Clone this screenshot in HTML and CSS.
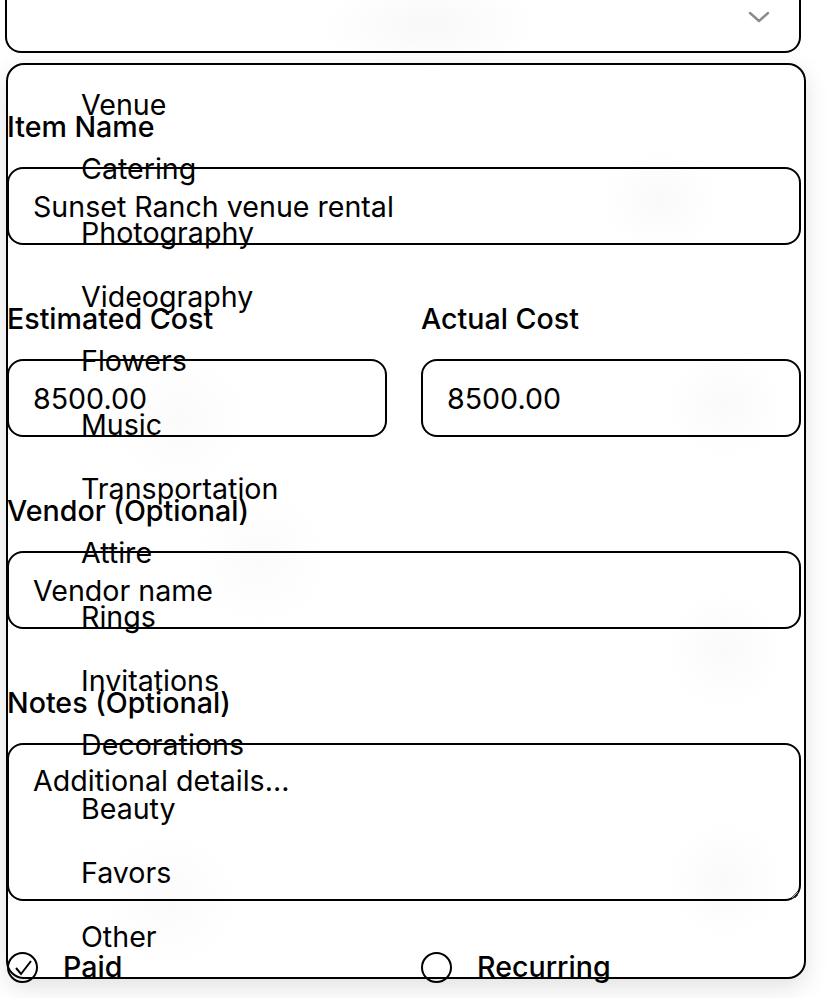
FILE: index.html
```html
<!DOCTYPE html>
<html lang="en">
<head>
<meta charset="utf-8">
<title>Budget item</title>
<link rel="stylesheet" href="styles.css">
</head>
<body>
<div class="page">
  <form class="form">
    <div class="select-box">
      <svg class="chevron" width="22" height="12" viewBox="0 0 22 12"><path d="M2 2 L11 10 L20 2" fill="none" stroke="#8a8a8a" stroke-width="2.4" stroke-linecap="round" stroke-linejoin="round"/></svg>
    </div>

    <div class="field">
      <label class="label">Item Name</label>
      <input class="input" type="text" value="Sunset Ranch venue rental">
    </div>

    <div class="row">
      <div class="field">
        <label class="label">Estimated Cost</label>
        <input class="input" type="text" value="8500.00">
      </div>
      <div class="field">
        <label class="label">Actual Cost</label>
        <input class="input" type="text" value="8500.00">
      </div>
    </div>

    <div class="field">
      <label class="label">Vendor (Optional)</label>
      <input class="input" type="text" placeholder="Vendor name">
    </div>

    <div class="field">
      <label class="label">Notes (Optional)</label>
      <textarea class="input textarea" placeholder="Additional details..."></textarea>
    </div>

    <div class="row checks">
      <div class="check">
        <span class="circle">
          <svg width="30" height="30" viewBox="0 0 30 30"><path d="M8 16 L13 22 L23 9" fill="none" stroke="#000" stroke-width="2"/></svg>
        </span>
        <span class="check-label">Paid</span>
      </div>
      <div class="check">
        <span class="circle"></span>
        <span class="check-label">Recurring</span>
      </div>
    </div>
  </form>

  <ul class="listbox">
    <li>Venue</li>
    <li>Catering</li>
    <li>Photography</li>
    <li>Videography</li>
    <li>Flowers</li>
    <li>Music</li>
    <li>Transportation</li>
    <li>Attire</li>
    <li>Rings</li>
    <li>Invitations</li>
    <li>Decorations</li>
    <li>Beauty</li>
    <li>Favors</li>
    <li>Other</li>
  </ul>
</div>
</body>
</html>
```

FILE: styles.css
```css
html, body {
  margin: 0;
  padding: 0;
  height: 100%;
  overflow: hidden;
}

body {
  font-family: Inter, "Noto Sans", sans-serif;
  color: #000;
  background-color: #fff;
  background-image:
    radial-gradient(ellipse 110px 45px at 430px 25px, #f8f8f8, rgba(255,255,255,0)),
    radial-gradient(ellipse 60px 50px at 660px 200px, #fafafa, rgba(255,255,255,0)),
    radial-gradient(ellipse 60px 55px at 725px 405px, #fafafa, rgba(255,255,255,0)),
    radial-gradient(ellipse 60px 60px at 725px 650px, #fafafa, rgba(255,255,255,0)),
    radial-gradient(ellipse 60px 60px at 725px 880px, #fafafa, rgba(255,255,255,0)),
    radial-gradient(ellipse 70px 70px at 260px 560px, #fbfbfb, rgba(255,255,255,0)),
    radial-gradient(ellipse 70px 70px at 180px 420px, #fbfbfb, rgba(255,255,255,0)),
    radial-gradient(ellipse 70px 70px at 170px 900px, #fbfbfb, rgba(255,255,255,0));
}

.page {
  position: relative;
  height: 100%;
}

.form {
  display: flex;
  flex-direction: column;
  gap: 57px;
  width: 794px;
  margin-left: 7px;
}

.select-box {
  position: relative;
  box-sizing: border-box;
  height: 84px;
  margin-top: -31px;
  margin-left: -2px;
  width: 796px;
  border: 2px solid #000;
  border-radius: 16px;
}

.chevron {
  position: absolute;
  right: 29px;
  top: 40px;
}

.field {
  display: flex;
  flex-direction: column;
  gap: 23px;
}

.label {
  font-size: 28.6px;
  line-height: 34px;
  font-weight: 500;
}

.input {
  box-sizing: border-box;
  width: 100%;
  height: 78px;
  margin: 0;
  padding: 1px 24px 0;
  border: 2px solid #000;
  border-radius: 16px;
  background: transparent;
  font-family: Inter, "Noto Sans", sans-serif;
  font-size: 28.6px;
  color: #000;
  outline: none;
}

.input::placeholder {
  color: #000;
  opacity: 1;
}

.textarea {
  height: 158px;
  padding: 19px 24px;
  line-height: 34px;
  display: block;
}

.row {
  display: grid;
  grid-template-columns: 1fr 1fr;
  column-gap: 34px;
}

.checks {
  margin-top: -8px;
}

.check {
  display: flex;
  align-items: center;
  gap: 25px;
}

.circle {
  box-sizing: border-box;
  width: 31px;
  height: 31px;
  border: 2px solid #000;
  border-radius: 50%;
  display: flex;
  align-items: center;
  justify-content: center;
}

.circle svg {
  flex: none;
}

.check-label {
  font-size: 28.6px;
  line-height: 34px;
  font-weight: 500;
}

.listbox {
  position: absolute;
  left: 6px;
  top: 63px;
  box-sizing: border-box;
  width: 800px;
  height: 916px;
  margin: 0;
  padding: 8px 0;
  list-style: none;
  border: 2px solid #000;
  border-radius: 18px;
  background: transparent;
  box-shadow: 0 8px 24px rgba(0, 0, 0, 0.12);
  pointer-events: none;
}

.listbox li {
  height: 64px;
  line-height: 64px;
  padding-left: 73px;
  font-size: 28.6px;
}
```
